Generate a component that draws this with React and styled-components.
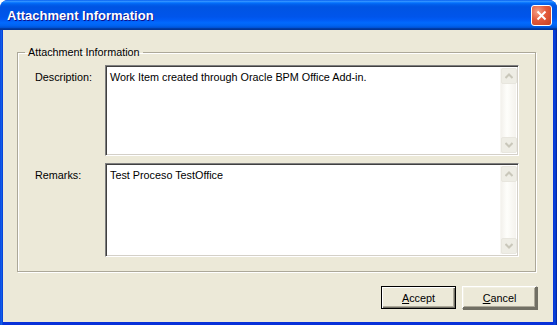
import React from "react";
import styled, { createGlobalStyle } from "styled-components";

const Global = createGlobalStyle`
  html, body { margin: 0; padding: 0; background: #ffffff; }
  body { width: 557px; height: 325px; overflow: hidden; }
  * { box-sizing: border-box; }
`;

const Window = styled.div`
  width: 557px;
  height: 325px;
  display: flex;
  flex-direction: column;
  background: linear-gradient(to right, #0831d9 0px, #166aee 1px, #0855dd 2px, #0831d9 3px, #0831d9 calc(100% - 4px), #0846d9 calc(100% - 2px), #001ea0 100%);
  border-radius: 8px 8px 0 0;
  overflow: hidden;
`;

const TitleBar = styled.div`
  height: 30px;
  flex: 0 0 30px;
  display: flex;
  align-items: center;
  justify-content: space-between;
  padding: 0 5px 0 7px;
  background: linear-gradient(to bottom, #0058ee 0%, #3593ff 4%, #288eff 6%, #127dff 8%, #036ffc 10%, #0262ee 14%, #0057e5 20%, #0054e3 24%, #0055eb 56%, #005bf5 66%, #026afe 76%, #0062ef 86%, #0052d6 92%, #0040ab 94%, #003092 100%);
`;

const Title = styled.span`
  font-family: "Liberation Sans", Arial, sans-serif;
  font-weight: bold;
  font-size: 13px;
  color: #ffffff;
  text-shadow: 1px 1px 0 #0f1089;
  padding-top: 1px;
`;

const CloseButton = styled.button`
  width: 21px;
  height: 21px;
  padding: 0;
  border: 1px solid #ffffff;
  border-radius: 3px;
  background: radial-gradient(circle at 30% 30%, #f4a088 0%, #e45a3c 45%, #c8401f 100%);
  display: flex;
  align-items: center;
  justify-content: center;
  margin-top: 1px;
`;

const Client = styled.div`
  flex: 1;
  margin: 0 4px 3px 3px;
  background: #ece9d8;
  display: flex;
  flex-direction: column;
  padding: 16px 16px 13px 14px;
  font-family: "Liberation Sans", Arial, sans-serif;
  font-size: 10.8px;
  color: #000000;
`;

const Group = styled.fieldset`
  margin: 0 1px 0 0;
  border: 1px solid #aca899;
  box-shadow: 1px 1px 0 #ffffff, inset 1px 1px 0 #ffffff;
  padding: 6px 16px 11px 0;
  display: grid;
  grid-template-columns: 87px 1fr;
  grid-template-rows: 91px 94px;
  row-gap: 7px;
  height: 226px;
`;

const Legend = styled.legend`
  padding: 0 3px;
  margin-left: 7px;
  line-height: 13px;
`;

const Label = styled.div`
  padding: 6px 0 0 17px;
`;

const Field = styled.div`
  display: flex;
  background: #ffffff;
  border-top: 1px solid #808080;
  border-left: 1px solid #808080;
  border-right: 1px solid #ffffff;
  border-bottom: 1px solid #ffffff;
  box-shadow: inset 1px 1px 0 #404040, inset -1px -1px 0 #d4d0c8;
  padding: 2px;
`;

const Text = styled.div`
  flex: 1;
  padding: 3px 0 0 2px;
  line-height: 13px;
`;

const ScrollBar = styled.div`
  width: 16px;
  display: flex;
  flex-direction: column;
  justify-content: space-between;
  background: linear-gradient(to right, #f3f1ec 0%, #fefefb 40%, #f4f2ed 100%);
  border-left: 1px solid #f7f6f2;
`;

const Arrow = styled.div`
  width: 16px;
  height: 16px;
  border: 1px solid #e8e6de;
  border-radius: 2px;
  background: #eeede5;
  display: flex;
  align-items: center;
  justify-content: center;
`;

const Footer = styled.div`
  margin-top: auto;
  display: flex;
  justify-content: flex-end;
  gap: 6px;
`;

const Button = styled.button`
  width: 75px;
  height: 23px;
  padding: 0;
  font-family: "Liberation Sans", Arial, sans-serif;
  font-size: 10.8px;
  color: #000;
  background: #ece9d8;
  border: 1px solid ${(p) => (p.$default ? "#000000" : "#ffffff")};
  box-shadow: ${(p) =>
    p.$default
      ? "inset 1px 1px 0 #ffffff, inset -1px -1px 0 #716f64, inset -2px -2px 0 #aca899"
      : "inset -1px -1px 0 #716f64, 1px 1px 0 #716f64, inset 1px 1px 0 #f1efe2, inset -2px -2px 0 #aca899"};
  border-right-color: ${(p) => (p.$default ? "#000000" : "#716f64")};
  border-bottom-color: ${(p) => (p.$default ? "#000000" : "#716f64")};
  u { text-decoration: underline; }
`;

const Chevron = ({ up }) => (
  <svg width="8" height="6" viewBox="0 0 8 6">
    <path
      d={up ? "M0.5 5 L4 1.5 L7.5 5" : "M0.5 1 L4 4.5 L7.5 1"}
      fill="none"
      stroke="#c9c7ba"
      strokeWidth="2"
    />
  </svg>
);

const TextBox = ({ children }) => (
  <Field>
    <Text>{children}</Text>
    <ScrollBar>
      <Arrow><Chevron up /></Arrow>
      <Arrow><Chevron /></Arrow>
    </ScrollBar>
  </Field>
);

export default function App() {
  return (
    <>
      <Global />
      <Window>
        <TitleBar>
          <Title>Attachment Information</Title>
          <CloseButton aria-label="Close">
            <svg width="11" height="11" viewBox="0 0 11 11">
              <path d="M1.5 1.5 L9.5 9.5 M9.5 1.5 L1.5 9.5" stroke="#ffffff" strokeWidth="2" />
            </svg>
          </CloseButton>
        </TitleBar>
        <Client>
          <Group>
            <Legend>Attachment Information</Legend>
            <Label>Description:</Label>
            <TextBox>Work Item created through Oracle BPM Office Add-in.</TextBox>
            <Label>Remarks:</Label>
            <TextBox>Test Proceso TestOffice</TextBox>
          </Group>
          <Footer>
            <Button $default><u>A</u>ccept</Button>
            <Button><u>C</u>ancel</Button>
          </Footer>
        </Client>
      </Window>
    </>
  );
}
